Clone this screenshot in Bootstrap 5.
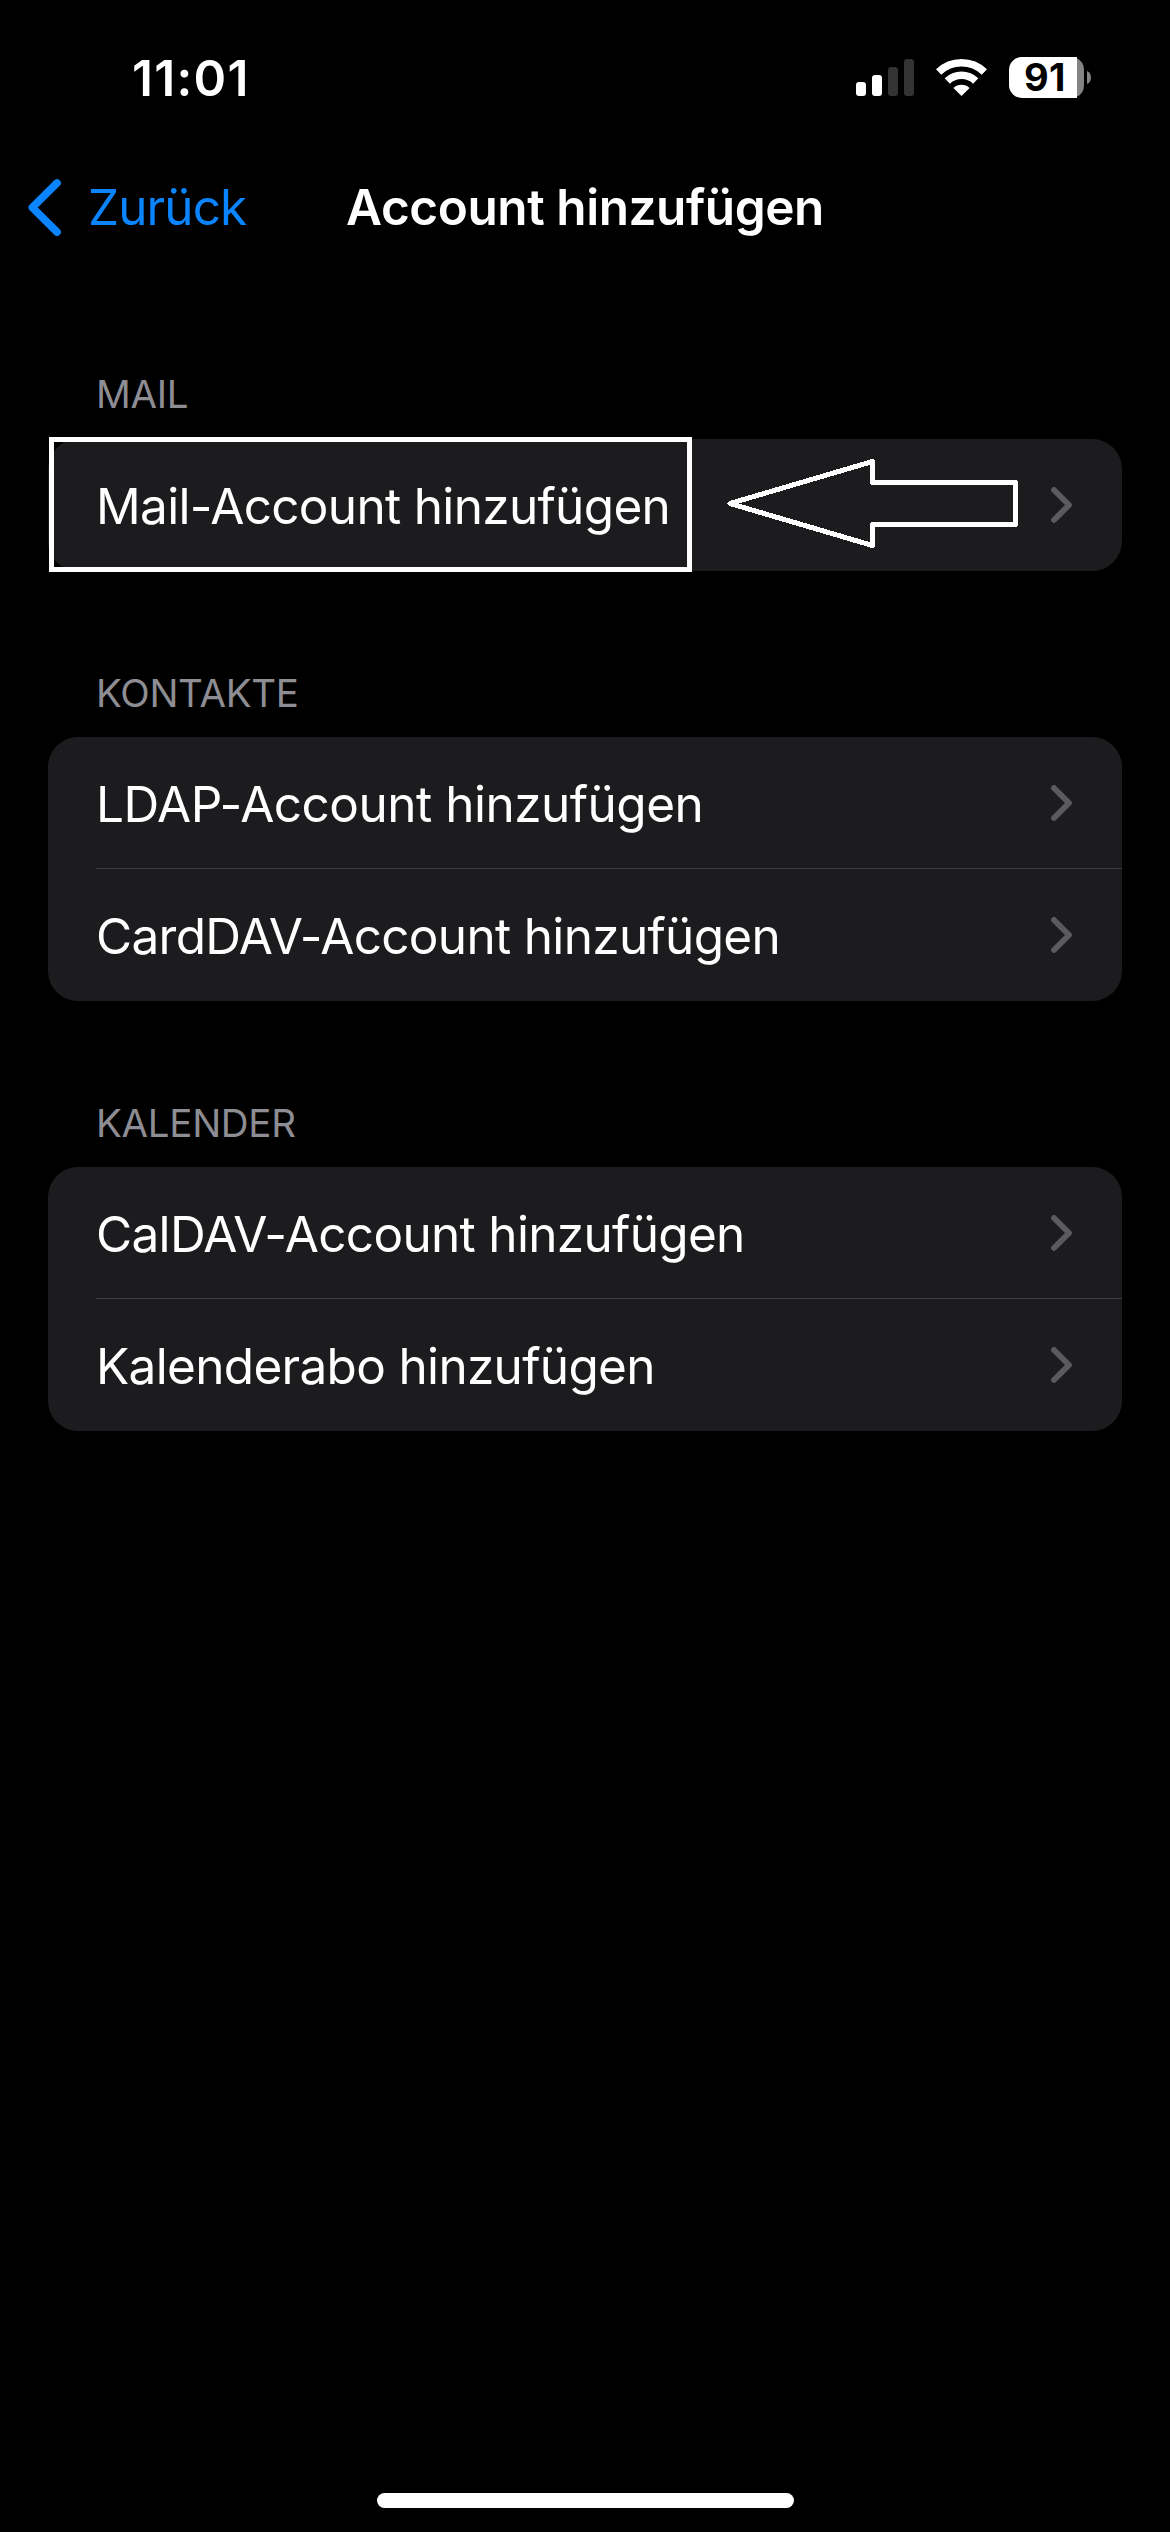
<!DOCTYPE html>
<html lang="de" data-bs-theme="dark">
<head>
<meta charset="utf-8">
<title>Account hinzufügen</title>
<meta name="viewport" content="width=device-width, initial-scale=1">
<link href="https://cdn.jsdelivr.net/npm/bootstrap@5.3.0/dist/css/bootstrap.min.css" rel="stylesheet">
<style>
  body { background: #000; color: #fff; font-family: Inter, "Liberation Sans", sans-serif; font-size: 49.5px; line-height: 60px; }
  svg { display: block; flex: none; }
  .screen { height: 2532px; background: #000; }
  .status-bar { height: 155px; padding: 48px 79px 0 132px; }
  .clock { font-weight: 600; letter-spacing: 1.3px; }
  .status-icons { gap: 22px; margin-top: 5px; }
  .charge { font: 700 38px Inter, "Liberation Sans", sans-serif; letter-spacing: .3px; }
  .nav-head { height: 104px; }
  .nav-title { font-weight: 600; letter-spacing: -.43px; }
  .back-link { left: 28px; top: 0; height: 104px; color: #0a84ff; text-decoration: none; gap: 27px; letter-spacing: -.9px; }
  .settings { padding: 111px 48px 0; }
  .group-title { color: #8d8d93; font-size: 38.5px; font-weight: 400; line-height: 48px; letter-spacing: -.3px; padding-left: 48px; margin: 98px 0 20px; }
  .group-title.first { margin: 0 0 21px; }
  .group-box { background: #1c1c1e; border-radius: 30px; }
  .entry { height: 132px; background: transparent; border: 0; padding: 0 50px 0 48px; color: #fff; letter-spacing: -.68px; }
  .entry span { padding-top: 2px; }
  .entry.wide { letter-spacing: -.5px; }
  .entry + .entry::before { content: ""; height: 1px; background: #3d3d41; left: 48px; right: 0; top: -1px; position: absolute; }
  .mark-box { left: 1px; top: -2px; width: 643px; height: 135px; border: 5px solid #fff; }
  .mark-arrow { left: 670px; top: 10px; }
  .home-bar { width: 417px; height: 15px; border-radius: 8px; background: #fff; margin-bottom: 24px; }
</style>
</head>
<body>
<svg width="0" height="0" class="position-absolute" aria-hidden="true">
  <symbol id="chev" viewBox="0 0 21 36"><path d="M3 3 18 18 3 33" fill="none" stroke="#5a5a5f" stroke-width="5.8" stroke-linecap="round" stroke-linejoin="round"/></symbol>
</svg>
<div class="screen d-flex flex-column">
  <header class="status-bar d-flex justify-content-between align-items-start">
    <div class="clock">11:01</div>
    <div class="status-icons d-flex">
      <svg width="58" height="49" viewBox="0 -4 58 49">
        <rect x="0" y="25" width="10" height="14" rx="3" fill="#fff"/>
        <rect x="16" y="18" width="10" height="21" rx="3" fill="#fff"/>
        <rect x="32" y="10" width="10" height="29" rx="3" fill="#333"/>
        <rect x="48" y="2" width="10" height="37" rx="3" fill="#333"/>
      </svg>
      <svg width="51" height="49" viewBox="0 -4 51 49">
        <g fill="none" stroke="#fff" stroke-width="7.6">
          <path d="M2.6 15A33 33 0 0 1 48.4 15"/>
          <path d="M11.3 24A20.5 20.5 0 0 1 39.7 24"/>
        </g>
        <path d="M25.5 39 17.4 30.9A12 12 0 0 1 33.6 30.9Z" fill="#fff"/>
      </svg>
      <svg width="82" height="49" viewBox="0 -4 82 49">
        <path d="M13 0H68V41H13A13 13 0 0 1 0 28V13A13 13 0 0 1 13 0Z" fill="#fff"/>
        <path d="M68 1.2A13 13 0 0 1 75 13V28A13 13 0 0 1 68 39.8Z" fill="#848484"/>
        <path d="M78 14C83.3 16 83.3 25 78 27Z" fill="#848484"/>
        <text class="charge" x="15" y="34" fill="#000">91</text>
      </svg>
    </div>
  </header>
  <nav class="nav-head position-relative d-flex justify-content-center align-items-center">
    <a class="back-link position-absolute d-flex align-items-center" href="#">
      <svg width="33" height="57" viewBox="0 0 33 57"><path d="M29 4 4.3 28.5 29 53" fill="none" stroke="#0a84ff" stroke-width="7.6" stroke-linecap="round" stroke-linejoin="round"/></svg>
      <span>Zurück</span>
    </a>
    <span class="nav-title">Account hinzufügen</span>
  </nav>
  <main class="settings flex-grow-1">
    <h2 class="group-title first">MAIL</h2>
    <div class="group-box list-group position-relative">
      <a class="entry list-group-item d-flex justify-content-between align-items-center" href="#"><span>Mail-Account hinzufügen</span><svg width="21" height="36"><use href="#chev"/></svg></a>
      <div class="mark-box position-absolute z-2"></div>
      <svg class="mark-arrow position-absolute z-2" width="310" height="110" viewBox="0 0 310 110" shape-rendering="crispEdges">
        <path d="M12 54.5 154.5 12.5V33.5H297.5V75.5H154.5V96.5Z" fill="none" stroke="#fff" stroke-width="5" stroke-linejoin="round"/>
      </svg>
    </div>
    <h2 class="group-title">KONTAKTE</h2>
    <div class="group-box list-group">
      <a class="entry wide list-group-item d-flex justify-content-between align-items-center" href="#"><span>LDAP-Account hinzufügen</span><svg width="21" height="36"><use href="#chev"/></svg></a>
      <a class="entry list-group-item d-flex justify-content-between align-items-center" href="#"><span>CardDAV-Account hinzufügen</span><svg width="21" height="36"><use href="#chev"/></svg></a>
    </div>
    <h2 class="group-title">KALENDER</h2>
    <div class="group-box list-group">
      <a class="entry list-group-item d-flex justify-content-between align-items-center" href="#"><span>CalDAV-Account hinzufügen</span><svg width="21" height="36"><use href="#chev"/></svg></a>
      <a class="entry list-group-item d-flex justify-content-between align-items-center" href="#"><span>Kalenderabo hinzufügen</span><svg width="21" height="36"><use href="#chev"/></svg></a>
    </div>
  </main>
  <div class="home-bar align-self-center"></div>
</div>
<script src="https://cdn.jsdelivr.net/npm/bootstrap@5.3.0/dist/js/bootstrap.bundle.min.js"></script>
</body>
</html>
